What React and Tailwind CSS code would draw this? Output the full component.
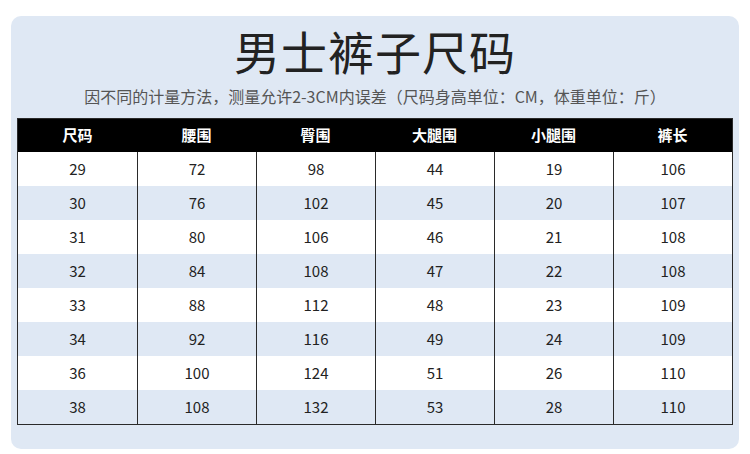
const HEAD = ['尺码', '腰围', '臀围', '大腿围', '小腿围', '裤长'];

const ROWS = [
  [29, 72, 98, 44, 19, 106],
  [30, 76, 102, 45, 20, 107],
  [31, 80, 106, 46, 21, 108],
  [32, 84, 108, 47, 22, 108],
  [33, 88, 112, 48, 23, 109],
  [34, 92, 116, 49, 24, 109],
  [36, 100, 124, 51, 26, 110],
  [38, 108, 132, 53, 28, 110],
];

export default function App() {
  return (
    <div
      className="w-[750px] h-[454px] bg-white pt-[16px] px-[11px]"
      style={{ fontFamily: '"Noto Sans CJK SC", "Noto Sans", sans-serif' }}
    >
      <div className="w-[728px] h-[433px] rounded-[10px] bg-[#dfe8f4] px-[6px] pt-[11px]">
        {/* Title */}
        <h1 className="text-center text-[46px] leading-[46px] font-normal text-[#222] tracking-[1px]">
          男士裤子尺码
        </h1>
        <p className="mt-[13px] text-center text-[16px] leading-[20px] text-[#555]">
          因不同的计量方法，测量允许2-3CM内误差（尺码身高单位：CM，体重单位：斤）
        </p>

        {/* Size table */}
        <div className="mt-[12px] border border-[#2a2a2a]">
          <div className="grid grid-cols-6 h-[33px] bg-black text-white text-[15px] font-bold">
            {HEAD.map((h) => (
              <div key={h} className="flex items-center justify-center">
                {h}
              </div>
            ))}
          </div>
          {ROWS.map((row, i) => (
            <div
              key={i}
              className={
                'grid grid-cols-6 h-[34px] text-[15px] text-[#222] ' +
                (i % 2 === 1 ? 'bg-[#dfe8f4]' : 'bg-white')
              }
            >
              {row.map((v, j) => (
                <div
                  key={j}
                  className={
                    'flex items-center justify-center ' +
                    (j > 0 ? 'border-l border-[#2a2a2a]' : '')
                  }
                >
                  {v}
                </div>
              ))}
            </div>
          ))}
        </div>
      </div>
    </div>
  );
}
